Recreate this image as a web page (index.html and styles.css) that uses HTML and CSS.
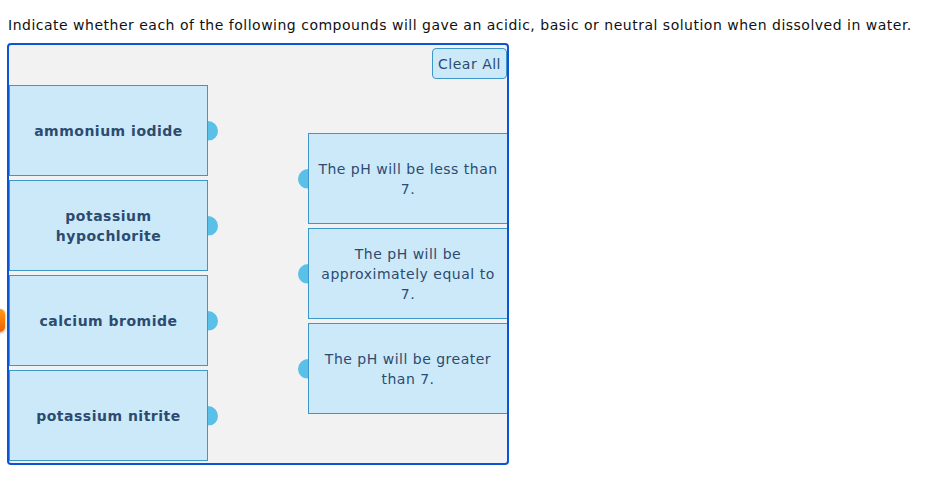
FILE: index.html
```html
<!DOCTYPE html>
<html lang="en">
<head>
    <meta charset="UTF-8">
    <meta name="viewport" content="width=device-width, initial-scale=1.0">
    <title>Acidic, basic or neutral</title>
    <link rel="stylesheet" href="styles.css">
</head>
<body>
    <p class="question">Indicate whether each of the following compounds will gave an acidic, basic or neutral solution when dissolved in water.</p>

    <div class="match-board">
        <div class="toolbar">
            <button type="button" class="clear-btn">Clear All</button>
        </div>

        <div class="columns">
            <div class="col col-left">
                <div class="item item-left">ammonium iodide<span class="dot dot-right"></span></div>
                <div class="item item-left">potassium hypochlorite<span class="dot dot-right"></span></div>
                <div class="item item-left">calcium bromide<span class="dot dot-right"></span><span class="grip"></span></div>
                <div class="item item-left">potassium nitrite<span class="dot dot-right"></span></div>
            </div>

            <div class="col col-right">
                <div class="item item-right"><span class="dot dot-left"></span>The pH will be less than 7.</div>
                <div class="item item-right"><span class="dot dot-left"></span>The pH will be approximately equal to 7.</div>
                <div class="item item-right"><span class="dot dot-left"></span>The pH will be greater than 7.</div>
            </div>
        </div>
    </div>
</body>
</html>
```

FILE: styles.css
```css
body {
    font-family: "DejaVu Sans", Verdana, sans-serif;
    font-size: 14px;
    letter-spacing: 0.5px;
    color: #111;
    background-color: white;
    margin: 0;
    padding: 17px 8px 8px 8px;
}

.question {
    margin: 0 0 9px 0;
    line-height: 17px;
}

.match-board {
    width: 502px;
    box-sizing: border-box;
    margin-left: -1px;
    border: 2px solid #0a55d6;
    border-radius: 4px;
    background-color: #f2f2f2;
    padding-bottom: 2px;
}

.toolbar {
    display: flex;
    justify-content: flex-end;
    padding-top: 3px;
}

.clear-btn {
    font-family: inherit;
    font-size: 14px;
    letter-spacing: 0.5px;
    color: #2c4b70;
    background-color: #cce9f9;
    border: 1px solid #3d98c9;
    border-radius: 4px;
    height: 31px;
    padding: 0 5px;
    cursor: pointer;
}

.columns {
    display: grid;
    grid-template-columns: 199px 199px;
    column-gap: 100px;
    margin-top: 6px;
}

.col {
    display: flex;
    flex-direction: column;
    gap: 4px;
}

.col-right {
    margin-top: 48px;
}

.item {
    position: relative;
    height: 91px;
    box-sizing: border-box;
    display: flex;
    align-items: center;
    justify-content: center;
    text-align: center;
    background-color: #cce9f9;
    border: 1px solid #3d98c9;
    color: #2c4b70;
    line-height: 20px;
    padding: 0 8px;
}

.item-left {
    font-weight: bold;
    padding: 1px 10px 0 10px;
}

.item-right {
    border-right: none;
}

/* connector knobs, half hidden behind the card */
.dot {
    position: absolute;
    top: 50%;
    width: 20px;
    height: 20px;
    margin-top: -10px;
    border-radius: 50%;
    background-color: #5bc0e8;
}

.dot-right {
    right: -11px;
    clip-path: inset(0 0 0 50%);
}

.dot-left {
    left: -11px;
    clip-path: inset(0 50% 0 0);
}

.grip {
    position: absolute;
    left: -19px;
    top: 50%;
    margin-top: -12px;
    width: 14px;
    height: 23px;
    border-radius: 0 5px 5px 0;
    background: linear-gradient(to bottom, #ff9a1a, #f06000);
    box-shadow: 0 1px 3px rgba(0, 0, 0, 0.35);
}
```
